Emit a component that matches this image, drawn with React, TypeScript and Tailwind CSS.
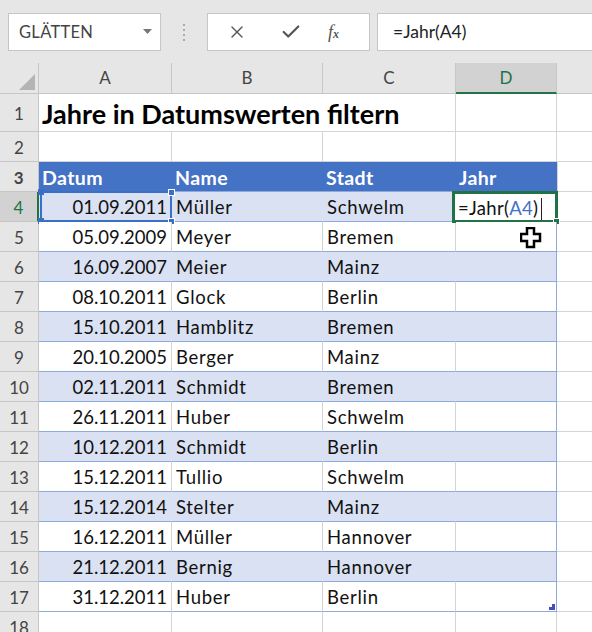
import { X, Check } from "lucide-react";

const font = { fontFamily: "Lato, 'Open Sans', sans-serif" };

const rows = [
  ["01.09.2011", "Müller", "Schwelm"],
  ["05.09.2009", "Meyer", "Bremen"],
  ["16.09.2007", "Meier", "Mainz"],
  ["08.10.2011", "Glock", "Berlin"],
  ["15.10.2011", "Hamblitz", "Bremen"],
  ["20.10.2005", "Berger", "Mainz"],
  ["02.11.2011", "Schmidt", "Bremen"],
  ["26.11.2011", "Huber", "Schwelm"],
  ["10.12.2011", "Schmidt", "Berlin"],
  ["15.12.2011", "Tullio", "Schwelm"],
  ["15.12.2014", "Stelter", "Mainz"],
  ["16.12.2011", "Müller", "Hannover"],
  ["21.12.2011", "Bernig", "Hannover"],
  ["31.12.2011", "Huber", "Berlin"],
];

function RowHead({ n, h, active }: { n: number | string; h: string; active?: boolean }) {
  return (
    <div
      className={`${h} w-[39px] shrink-0 flex items-center justify-center pt-[2px] border-b border-r text-[17px] ${
        active
          ? "bg-[#d2d2d2] text-[#217346] border-r-2 border-r-[#217346] border-b-[#c6c6c6]"
          : "bg-[#e6e6e6] text-[#444] border-[#c6c6c6]"
      }`}
    >
      {n}
    </div>
  );
}

function Toolbar() {
  return (
    <div className="h-[63px] bg-[#e6e6e6] flex items-center gap-0 pt-[1px]">
      <div className="ml-[8px] w-[153px] h-[38px] bg-white border border-[#c6c6c6] flex items-center pl-[10px] pr-[8px]">
        <span className="text-[16.5px] text-[#444] flex-1 tracking-[0.3px]">GLÄTTEN</span>
        <svg width="9" height="6" viewBox="0 0 9 6">
          <path d="M0 0h9L4.5 5z" fill="#777" />
        </svg>
      </div>
      <div className="w-[46px] flex flex-col items-center gap-[3px]">
        <span className="w-[2px] h-[2px] bg-[#aaa]" />
        <span className="w-[2px] h-[2px] bg-[#aaa]" />
        <span className="w-[2px] h-[2px] bg-[#aaa]" />
        <span className="w-[2px] h-[2px] bg-[#aaa]" />
      </div>
      <div className="w-[163px] h-[38px] bg-white border border-[#c6c6c6] flex items-center">
        <X className="ml-[19px] text-[#555]" size={20} strokeWidth={1.6} />
        <Check className="ml-[33px] text-[#555]" size={22} strokeWidth={2.4} />
        <span className="ml-[26px] text-[#555] text-[18px] italic" style={{ fontFamily: "'Liberation Serif', serif" }}>
          f<span className="text-[12px] font-bold">x</span>
        </span>
      </div>
      <div className="ml-[7px] flex-1 h-[38px] bg-white border border-[#c6c6c6] border-r-0 flex items-center pl-[15px] text-[17.5px] text-[#222]">
        =Jahr(A4)
      </div>
    </div>
  );
}

export default function App() {
  return (
    <div className="w-[592px] h-[632px] overflow-hidden bg-white relative" style={font}>
      <Toolbar />
      {/* column headers */}
      <div className="flex h-[31px] text-[17px] text-[#444]">
        <div className="w-[39px] shrink-0 bg-[#e6e6e6] border-r border-b border-[#c6c6c6] relative">
          <svg className="absolute right-[3px] bottom-[3px]" width="16" height="16" viewBox="0 0 16 16">
            <path d="M16 0V16H0z" fill="#b4b4b4" />
          </svg>
        </div>
        <div className="w-[133px] shrink-0 bg-[#e6e6e6] border-r border-b border-[#c6c6c6] flex items-center justify-center">A</div>
        <div className="w-[151px] shrink-0 bg-[#e6e6e6] border-r border-b border-[#c6c6c6] flex items-center justify-center">B</div>
        <div className="w-[133px] shrink-0 bg-[#e6e6e6] border-r border-b border-[#c6c6c6] flex items-center justify-center">C</div>
        <div className="w-[101px] shrink-0 bg-[#d2d2d2] border-r border-[#c6c6c6] border-b-2 border-b-[#217346] flex items-center justify-center text-[#217346]">D</div>
        <div className="flex-1 bg-[#e6e6e6] border-b border-[#c6c6c6]" />
      </div>
      {/* row 1 */}
      <div className="flex h-[38px]">
        <RowHead n={1} h="h-[38px]" />
        <div className="w-[417px] shrink-0 border-r border-b border-[#d4d4d4] flex items-center pl-[3px] pt-[3px] text-[27px] font-bold text-black whitespace-nowrap">
          Jahre in Datumswerten filtern
        </div>
        <div className="w-[101px] shrink-0 border-r border-b border-[#d4d4d4]" />
        <div className="flex-1 border-b border-[#d4d4d4]" />
      </div>
      {/* row 2 */}
      <div className="flex h-[30px]">
        <RowHead n={2} h="h-[30px]" />
        <div className="w-[133px] shrink-0 border-r border-b border-[#d4d4d4]" />
        <div className="w-[151px] shrink-0 border-r border-b border-[#d4d4d4]" />
        <div className="w-[133px] shrink-0 border-r border-b border-[#d4d4d4]" />
        <div className="w-[101px] shrink-0 border-r border-b border-[#d4d4d4]" />
        <div className="flex-1 border-b border-[#d4d4d4]" />
      </div>
      {/* row 3 table header */}
      <div className="flex h-[30px] text-[19.5px] font-bold text-white tracking-[0.4px]">
        <RowHead n={3} h="h-[30px]" />
        <div className="w-[133px] shrink-0 bg-[#4472c4] border-b border-[#8ea9db] flex items-center pl-[3px] pt-[3px]">Datum</div>
        <div className="w-[151px] shrink-0 bg-[#4472c4] border-b border-[#8ea9db] flex items-center pl-[3px] pt-[3px]">Name</div>
        <div className="w-[133px] shrink-0 bg-[#4472c4] border-b border-[#8ea9db] flex items-center pl-[3px] pt-[3px]">Stadt</div>
        <div className="w-[101px] shrink-0 bg-[#4472c4] border-b border-[#8ea9db] flex items-center pl-[3px] pt-[3px]">Jahr</div>
        <div className="flex-1 border-l border-b border-[#d4d4d4]" />
      </div>
      {rows.map((r, i) => {
        const band = i % 2 === 0;
        const inner = band ? "bg-[#d9e1f2] border-r-[#d9e1f2]" : "bg-white border-r-[#d4d4d4]";
        const first = i === 0;
        return (
          <div key={i} className="flex h-[30px] text-[18.5px] text-[#111]">
            <RowHead n={i + 4} h="h-[30px]" active={first} />
            <div
              className={`w-[133px] shrink-0 border-r border-b border-b-[#8ea9db] ${inner} flex items-center justify-end pr-[4px] pt-[3px] relative ${
                first ? "bg-[#cbd6ee]" : ""
              }`}
            >
              {r[0]}
              {first && (
                <div className="absolute left-[1px] -top-[1px] -right-[1px] -bottom-[1px] border-2 border-[#3a6fc6]">
                  <span className="absolute -left-[4px] -top-[4px] w-[6px] h-[6px] bg-[#3a6fc6]" />
                  <span className="absolute -right-[5px] -top-[4px] w-[7px] h-[7px] bg-[#3a6fc6] border border-white" />
                  <span className="absolute -left-[4px] -bottom-[4px] w-[6px] h-[6px] bg-[#3a6fc6]" />
                  <span className="absolute -right-[5px] -bottom-[5px] w-[7px] h-[7px] bg-[#3a6fc6] border border-white" />
                </div>
              )}
            </div>
            <div className={`w-[151px] shrink-0 border-r border-b border-b-[#8ea9db] ${inner} flex items-center pl-[4px] pt-[3px] tracking-[0.7px]`}>{r[1]}</div>
            <div className={`w-[133px] shrink-0 border-r border-b border-b-[#8ea9db] ${inner} flex items-center pl-[4px] pt-[3px] tracking-[0.7px]`}>{r[2]}</div>
            <div
              className={`w-[101px] shrink-0 border-r border-b border-b-[#8ea9db] border-r-[#8ea9db] ${
                band ? "bg-[#d9e1f2]" : "bg-white"
              } flex items-center relative`}
            >
              {first && (
                <div className="absolute -left-[4px] -top-[1px] -right-[2px] -bottom-[2px] border-[3px] border-[#217346] bg-white flex items-center pl-[3px] pt-[3px] text-[#111] tracking-[0.3px]">
                  =Jahr(<span className="text-[#4472c4]">A4</span>)
                  <span className="ml-[3px] w-[1px] h-[22px] bg-[#222]" />
                  <span className="absolute -right-[5px] -bottom-[5px] w-[7px] h-[7px] bg-[#217346] border border-white" />
                </div>
              )}
              {i === rows.length - 1 && (
                <svg className="absolute right-[1px] bottom-[1px]" width="6" height="6" viewBox="0 0 6 6">
                  <path d="M6 0V6H0V3H3V0z" fill="#3f51b5" />
                </svg>
              )}
            </div>
            <div className="flex-1 border-b border-[#d4d4d4]" />
          </div>
        );
      })}
      {/* row 18 */}
      <div className="flex h-[30px]">
        <RowHead n={18} h="h-[30px]" />
        <div className="w-[133px] shrink-0 border-r border-[#d4d4d4]" />
        <div className="w-[151px] shrink-0 border-r border-[#d4d4d4]" />
        <div className="w-[133px] shrink-0 border-r border-[#d4d4d4]" />
        <div className="w-[101px] shrink-0 border-r border-[#d4d4d4]" />
        <div className="flex-1" />
      </div>
      {/* mouse cursor */}
      <svg className="absolute left-[520px] top-[227px]" width="22" height="22" viewBox="0 0 22 22">
        <path d="M7 1h7v6h6v7h-6v6H7v-6H1V7h6z" fill="white" stroke="black" strokeWidth="2.5" />
      </svg>
    </div>
  );
}
